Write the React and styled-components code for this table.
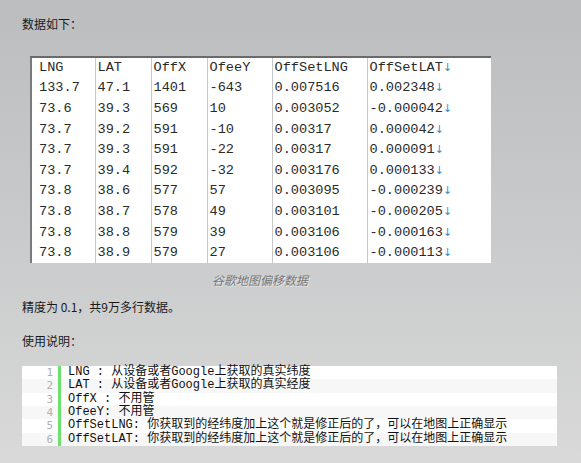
import React from "react";
import styled, { createGlobalStyle } from "styled-components";

const GlobalStyle = createGlobalStyle`
  html, body {
    margin: 0;
    padding: 0;
  }
  body {
    width: 581px;
    height: 463px;
    overflow: hidden;
    background: linear-gradient(180deg, #bbbdbe 0%, #c9cacb 50%, #d9d9d9 100%);
  }
`;

const rows = [
  ["133.7", "47.1", "1401", "-643", "0.007516", "0.002348"],
  ["73.6", "39.3", "569", "10", "0.003052", "-0.000042"],
  ["73.7", "39.2", "591", "-10", "0.00317", "0.000042"],
  ["73.7", "39.3", "591", "-22", "0.00317", "0.000091"],
  ["73.7", "39.4", "592", "-32", "0.003176", "0.000133"],
  ["73.8", "38.6", "577", "57", "0.003095", "-0.000239"],
  ["73.8", "38.7", "578", "49", "0.003101", "-0.000205"],
  ["73.8", "38.8", "579", "39", "0.003106", "-0.000163"],
  ["73.8", "38.9", "579", "27", "0.003106", "-0.000113"],
];

const headers = ["LNG", "LAT", "OffX", "OfeeY", "OffSetLNG", "OffSetLAT"];
const widths = [64, 56, 56, 65, 95, 124];

const notes = [
  "LNG : 从设备或者Google上获取的真实纬度",
  "LAT : 从设备或者Google上获取的真实经度",
  "OffX : 不用管",
  "OfeeY: 不用管",
  "OffSetLNG: 你获取到的经纬度加上这个就是修正后的了，可以在地图上正确显示",
  "OffSetLAT: 你获取到的经纬度加上这个就是修正后的了，可以在地图上正确显示",
];

const App = () => {
  return (
    <Page>
      <GlobalStyle />
      <Para>数据如下：</Para>
      <Figure>
        <DataTable>
          <colgroup>
            {widths.map((w, i) => (
              <col key={i} style={{ width: w }} />
            ))}
          </colgroup>
          <tbody>
            {[headers, ...rows].map((r, ri) => (
              <tr key={ri}>
                {r.map((c, ci) => (
                  <Cell key={ci} $first={ci === 0}>
                    {c}
                    {ci === 5 && <Arrow>↓</Arrow>}
                  </Cell>
                ))}
              </tr>
            ))}
          </tbody>
        </DataTable>
        <Caption>谷歌地图偏移数据</Caption>
      </Figure>
      <Para $top={11}>精度为 0.1，共9万多行数据。</Para>
      <Para $top={18}>使用说明：</Para>
      <CodeBlock>
        {notes.map((n, i) => (
          <CodeLine key={i} $alt={i % 2 === 1}>
            <LineNo>{i + 1}</LineNo>
            <LineText>{n}</LineText>
          </CodeLine>
        ))}
      </CodeBlock>
    </Page>
  );
};

const Page = styled.div`
  padding: 16px 22px 0 22px;
  font-family: "Noto Sans CJK SC", "DejaVu Sans", sans-serif;
  color: #1a1a1a;
`;

const Para = styled.p`
  margin: ${(p) => p.$top || 0}px 0 0 0;
  font-size: 12px;
  line-height: 16px;
  height: 16px;
`;

const Figure = styled.div`
  width: 460px;
  margin: 24px 0 0 8px;
`;

const DataTable = styled.table`
  width: 460px;
  table-layout: fixed;
  border-collapse: collapse;
  background: #fff;
  border-top: 2px solid #6a6a6a;
  border-left: 2px solid #7a7a7a;
  box-sizing: border-box;
  tr {
    height: 20.6px;
  }
`;

const Cell = styled.td`
  padding: 0 0 0 ${(p) => (p.$first ? 7 : 2)}px;
  border-right: 1px solid #c8c8c8;
  font-family: "Liberation Mono", "DejaVu Sans Mono", monospace;
  font-size: 13.6px;
  color: #2a2a2a;
  white-space: nowrap;
  overflow: hidden;
  &:last-child {
    border-right: none;
  }
`;

const Arrow = styled.span`
  color: #3a8cc8;
  font-family: "DejaVu Sans", sans-serif;
  font-size: 11px;
`;

const Caption = styled.div`
  margin-top: 9px;
  text-align: center;
  font-size: 12px;
  line-height: 16px;
  font-style: italic;
  color: #777;
  text-shadow: 1px 1px 0 #e6e6e6;
`;

const CodeBlock = styled.div`
  margin-top: 17px;
  width: 535px;
  display: flex;
  flex-direction: column;
`;

const CodeLine = styled.div`
  display: flex;
  height: 13.33px;
  line-height: 13.33px;
  background: ${(p) => (p.$alt ? "#f7f7f7" : "#ffffff")};
`;

const LineNo = styled.div`
  width: 31px;
  padding-right: 5px;
  text-align: right;
  color: #afafaf;
  font-family: "DejaVu Sans Mono", monospace;
  font-size: 11px;
  border-right: 3px solid #6ce26c;
`;

const LineText = styled.div`
  padding-left: 7px;
  font-family: "Liberation Mono", "Noto Sans CJK SC", monospace;
  font-size: 12px;
  color: #111;
  white-space: nowrap;
`;

export default App;
